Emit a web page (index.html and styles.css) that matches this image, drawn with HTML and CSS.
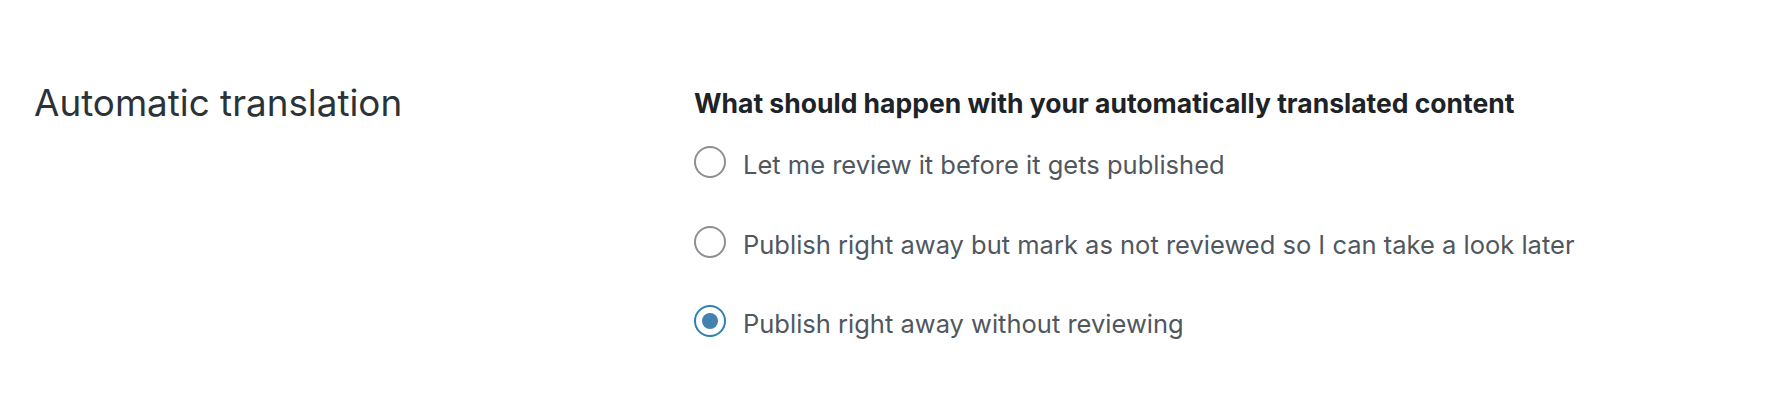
FILE: index.html
```html
<!DOCTYPE html>
<html lang="en">
<head>
    <meta charset="UTF-8">
    <meta name="viewport" content="width=device-width, initial-scale=1.0">
    <title>Automatic translation</title>
    <link rel="stylesheet" href="styles.css">
</head>
<body>
    <div class="settings-row">
        <h2 class="settings-title">Automatic translation</h2>
        <div class="settings-field">
            <p class="field-legend">What should happen with your automatically translated content</p>
            <label class="radio-option">
                <input type="radio" name="review" value="before-publish">
                <span>Let me review it before it gets published</span>
            </label>
            <label class="radio-option">
                <input type="radio" name="review" value="publish-not-reviewed">
                <span>Publish right away but mark as not reviewed so I can take a look later</span>
            </label>
            <label class="radio-option">
                <input type="radio" name="review" value="publish" checked>
                <span>Publish right away without reviewing</span>
            </label>
        </div>
    </div>
</body>
</html>
```

FILE: styles.css
```css
body {
    font-family: 'Inter', 'Noto Sans', sans-serif;
    background-color: #ffffff;
    margin: 0;
    padding: 0;
}
.settings-row {
    display: grid;
    grid-template-columns: 660px 1fr;
    padding: 79px 0 0 34px;
}
.settings-title {
    margin: 0;
    font-size: 36.8px;
    font-weight: 400;
    line-height: 48px;
    color: #2c3338;
}
.settings-field {
    display: flex;
    flex-direction: column;
    gap: 44.5px;
    padding-top: 8px;
}
.field-legend {
    margin: 0 0 -17.5px 0;
    font-size: 26.5px;
    font-weight: 700;
    line-height: 32px;
    color: #1d2327;
}
.radio-option {
    display: flex;
    align-items: flex-start;
    gap: 17px;
    font-size: 25.5px;
    line-height: 32px;
    color: #50575e;
    cursor: pointer;
}
.radio-option span {
    padding-top: 3px;
}
.radio-option input[type="radio"] {
    appearance: none;
    width: 32px;
    height: 32px;
    margin: 0;
    border: 2px solid #8c8f94;
    border-radius: 50%;
    background-color: #ffffff;
    display: flex;
    align-items: center;
    justify-content: center;
    flex-shrink: 0;
}
.radio-option input[type="radio"]:checked {
    border-color: #2f7fb3;
}
.radio-option input[type="radio"]:checked::before {
    content: "";
    width: 16px;
    height: 16px;
    border-radius: 50%;
    background-color: #4581b0;
}
```
